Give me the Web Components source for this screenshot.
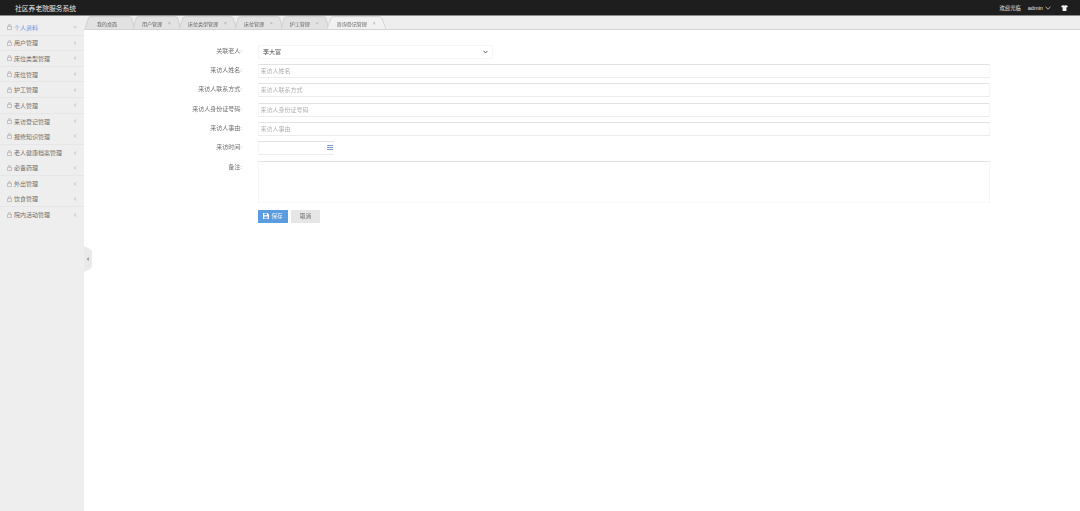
<!DOCTYPE html>
<html lang="zh">
<head>
<meta charset="utf-8">
<title>社区养老院服务系统</title>
<style>
  html, body { margin: 0; height: 100%; background: #fff; }
  body { font-family: "Liberation Sans", "Noto Sans CJK SC", sans-serif; color: #555; overflow: hidden; }
</style>
</head>
<body>
<nursing-app></nursing-app>

<script>
(function() {

  // small helper, every element below is just a shadow root with a style and markup
  function define(name, html, extra) {
    const template = document.createElement('template');
    template.innerHTML = html;
    class El extends HTMLElement {
      constructor() {
        super();
        this.attachShadow({ mode: 'open' });
        this.shadowRoot.appendChild(template.content.cloneNode(true));
      }
      connectedCallback() {
        if (extra) extra.call(this);
      }
    }
    customElements.define(name, El);
  }

  define('top-bar', `
    <style>
      :host { display: flex; align-items: center; height: 15px; padding: 0 12px 0 15px; background: #1e1e1e; border-bottom: 1px solid #8a8a8a; color: #e8e8e8; }
      .title { font-size: 6.8px; flex: 1; }
      .hello { font-size: 5.3px; }
      .user { font-size: 5.6px; margin-left: 7px; }
      .down { margin-left: 2px; }
      .shirt { margin-left: 10px; }
    </style>
    <span class="title">社区养老院服务系统</span>
    <span class="hello">欢迎光临</span>
    <span class="user">admin</span>
    <svg class="down" width="6" height="4" viewBox="0 0 6 4"><path d="M.5 .8 3 3.2 5.5 .8" fill="none" stroke="#ddd" stroke-width=".8"/></svg>
    <svg class="shirt" width="7" height="6" viewBox="0 0 7 6"><path d="M2 0 .1 1.2 .9 2.6 1.6 2.2V6H5.4V2.2L6.1 2.6 6.9 1.2 5 0C4.6 .8 2.4 .8 2 0Z" fill="#f2f2f2"/></svg>
  `);

  define('menu-item', `
    <style>
      :host { display: flex; align-items: center; height: 15.6px; box-sizing: border-box; padding: 0 7px; font-size: 6px; color: #6e6e6e; }
      :host([line]) { border-bottom: 1px solid #e6e6e6; }
      :host([active]) { color: #5b9bdf; }
      .text { flex: 1; margin-left: 2px; white-space: nowrap; }
      svg { flex: none; }
    </style>
    <svg width="5" height="6" viewBox="0 0 5 6"><path d="M.4 2.3H4.6V5.6H.4ZM1.5 2.3V1.3A1 1 0 0 1 3.5 1.3V2.3" fill="none" stroke="#aaa" stroke-width=".7"/></svg>
    <span class="text"><slot></slot></span>
    <svg width="4" height="4" viewBox="0 0 4 4"><path class="arrow" d="M3 .6 1 2 3 3.4" fill="none" stroke="#bbb" stroke-width=".7"/></svg>
  `, function() {
    if (this.hasAttribute('active')) {
      this.shadowRoot.querySelector('.arrow').setAttribute('d', 'M.5 1 2 3 3.5 1');
    }
  });

  define('side-menu', `
    <style>
      :host { display: block; flex: none; width: 84px; padding-top: 4px; box-sizing: border-box; background: #eee; }
    </style>
    <slot></slot>
  `);

  define('tab-item', `
    <style>
      :host { display: flex; align-items: center; position: relative; height: 13px; box-sizing: border-box; padding-top: 1px; font-size: 5px; color: #666; margin-right: -2px; }
      svg { position: absolute; left: 0; top: 0; width: 100%; height: 100%; }
      .text, .x { position: relative; white-space: nowrap; }
      .text { margin-left: 9px; }
      .x { margin-left: 6px; margin-right: 10px; color: #aaa; font-size: 5px; }
      .shape { fill: #e2e2e2; stroke: #c4c4c4; }
      :host([active]) .text { margin-left: 10px; }
      :host([active]) .x { margin-right: 10px; }
      :host([active]) .shape { fill: #f1f1f1; stroke: #c8c8c8; }
      :host([plain]) .text { margin-left: 12px; }
      :host([plain]) .x { visibility: hidden; width: 6px; margin: 0 12px 0 0; }
    </style>
    <svg preserveAspectRatio="none" viewBox="0 0 50 13"><path class="shape" vector-effect="non-scaling-stroke" stroke-width=".7" d="M0 13 3.5 2Q4 .6 6 .6H44Q46 .6 46.5 2L50 13"/></svg>
    <span class="text"><slot></slot></span>
    <span class="x">×</span>
  `);

  define('tab-bar', `
    <style>
      :host { display: flex; align-items: flex-end; height: 14px; box-sizing: border-box; padding-left: 1px; background: #eee; border-bottom: 1px solid #d4d4d4; }
    </style>
    <slot></slot>
  `);

  define('form-row', `
    <style>
      :host { display: grid; grid-template-columns: 158px 1fr; column-gap: 16px; align-items: start; }
      .label { font-size: 6px; color: #6e6e6e; text-align: right; line-height: 13px; white-space: nowrap; }
    </style>
    <span class="label"></span>
    <div><slot></slot></div>
  `, function() {
    this.shadowRoot.querySelector('.label').textContent = this.getAttribute('label');
  });

  const fieldCss = `
    input, select, textarea { display: block; box-sizing: border-box; width: 100%; margin: 0; padding: 0 1.5px; outline: none; background: #fff;
      font: 6px "Liberation Sans", "Noto Sans CJK SC", sans-serif; color: #555; border: 1px solid #f7f7f7; border-top-color: #e2e2e2; border-bottom-color: #ececec; border-radius: 0; }
    ::placeholder { color: #b0b0b0; opacity: 1; }
  `;

  define('text-field', `
    <style>
      :host { display: block; }
      ${fieldCss}
      input { height: 14px; }
    </style>
    <input type="text">
  `, function() {
    this.shadowRoot.querySelector('input').placeholder = this.getAttribute('placeholder');
  });

  define('select-field', `
    <style>
      :host { display: block; position: relative; width: 235px; }
      ${fieldCss}
      select { height: 14px; appearance: none; -webkit-appearance: none; padding-left: 4px; border-color: #f5f5f5; color: #444; }
      svg { position: absolute; right: 5px; top: 5px; }
    </style>
    <select><option>李大富</option></select>
    <svg width="5" height="4" viewBox="0 0 5 4"><path d="M.5 .8 2.5 3 4.5 .8" fill="none" stroke="#555" stroke-width=".9"/></svg>
  `);

  define('date-field', `
    <style>
      :host { display: block; position: relative; width: 76px; }
      ${fieldCss}
      input { height: 14px; }
      svg { position: absolute; right: 1px; top: 4px; }
    </style>
    <input type="text">
    <svg width="6" height="6" viewBox="0 0 6 6"><path d="M0 .5H6M0 2.5H6M0 4.5H6" stroke="#7f9cc8" stroke-width="1"/></svg>
  `);

  define('memo-field', `
    <style>
      :host { display: block; }
      ${fieldCss}
      textarea { height: 42px; resize: none; border-bottom-color: #fafafa; border-left-color: #f5f5f5; border-right-color: #f5f5f5; }
    </style>
    <textarea></textarea>
  `);

  define('app-button', `
    <style>
      :host { display: inline-flex; align-items: center; justify-content: center; gap: 2px; height: 13px; font-size: 5.6px; color: #666; background: #e6e6e6; width: 29px; }
      :host([primary]) { background: #5b9bdf; color: #eef5fc; width: 30px; }
      svg { display: none; }
      :host([primary]) svg { display: block; }
    </style>
    <svg width="6" height="6" viewBox="0 0 6 6"><path d="M0 0H4.6L6 1.4V6H0ZM1.2 .6V2.2H4V.6ZM1.2 3.4V5.4H4.8V3.4Z" fill="#fff" fill-rule="evenodd"/></svg>
    <slot></slot>
  `);

  define('visitor-form', `
    <style>
      :host { display: flex; flex-direction: column; gap: 5.4px; padding: 14.5px 90px 0 0; }
      .actions { display: flex; gap: 3px; margin: 1.5px 0 0 174px; }
    </style>
    <form-row label="关联老人:"><select-field></select-field></form-row>
    <form-row label="来访人姓名:"><text-field placeholder="来访人姓名"></text-field></form-row>
    <form-row label="来访人联系方式:"><text-field placeholder="来访人联系方式"></text-field></form-row>
    <form-row label="来访人身份证号码:"><text-field placeholder="来访人身份证号码"></text-field></form-row>
    <form-row label="来访人事由:"><text-field placeholder="来访人事由"></text-field></form-row>
    <form-row label="来访时间:"><date-field></date-field></form-row>
    <form-row label="备注:"><memo-field></memo-field></form-row>
    <div class="actions">
      <app-button primary>保存</app-button>
      <app-button>取消</app-button>
    </div>
  `);

  define('collapse-handle', `
    <style>
      :host { position: absolute; left: 84px; top: 246px; width: 8px; height: 26px; }
      svg { display: block; }
    </style>
    <svg width="8" height="26" viewBox="0 0 8 26"><path d="M0 0 6 3Q8 4 8 6V20Q8 22 6 23L0 26Z" fill="#eaeaea"/><path d="M4.8 11 2.6 13 4.8 15Z" fill="#999"/></svg>
  `);

  define('nursing-app', `
    <style>
      :host { display: flex; flex-direction: column; height: 511px; position: relative; filter: blur(.35px); }
      .body { display: flex; flex: 1; min-height: 0; }
      .main { flex: 1; min-width: 0; }
    </style>
    <top-bar></top-bar>
    <div class="body">
      <side-menu>
        <menu-item active line>个人资料</menu-item>
        <menu-item line>用户管理</menu-item>
        <menu-item line>床位类型管理</menu-item>
        <menu-item line>床位管理</menu-item>
        <menu-item line>护工管理</menu-item>
        <menu-item line>老人管理</menu-item>
        <menu-item>来访登记管理</menu-item>
        <menu-item line>报修知识管理</menu-item>
        <menu-item>老人健康档案管理</menu-item>
        <menu-item line>必备药理</menu-item>
        <menu-item>外出管理</menu-item>
        <menu-item line>饮食管理</menu-item>
        <menu-item>院内活动管理</menu-item>
      </side-menu>
      <div class="main">
        <tab-bar>
          <tab-item plain>我的桌面</tab-item>
          <tab-item>用户管理</tab-item>
          <tab-item>床位类型管理</tab-item>
          <tab-item>床位管理</tab-item>
          <tab-item>护工管理</tab-item>
          <tab-item active>咨询登记管理</tab-item>
        </tab-bar>
        <visitor-form></visitor-form>
      </div>
    </div>
    <collapse-handle></collapse-handle>
  `);

})();
</script>
</body>
</html>
